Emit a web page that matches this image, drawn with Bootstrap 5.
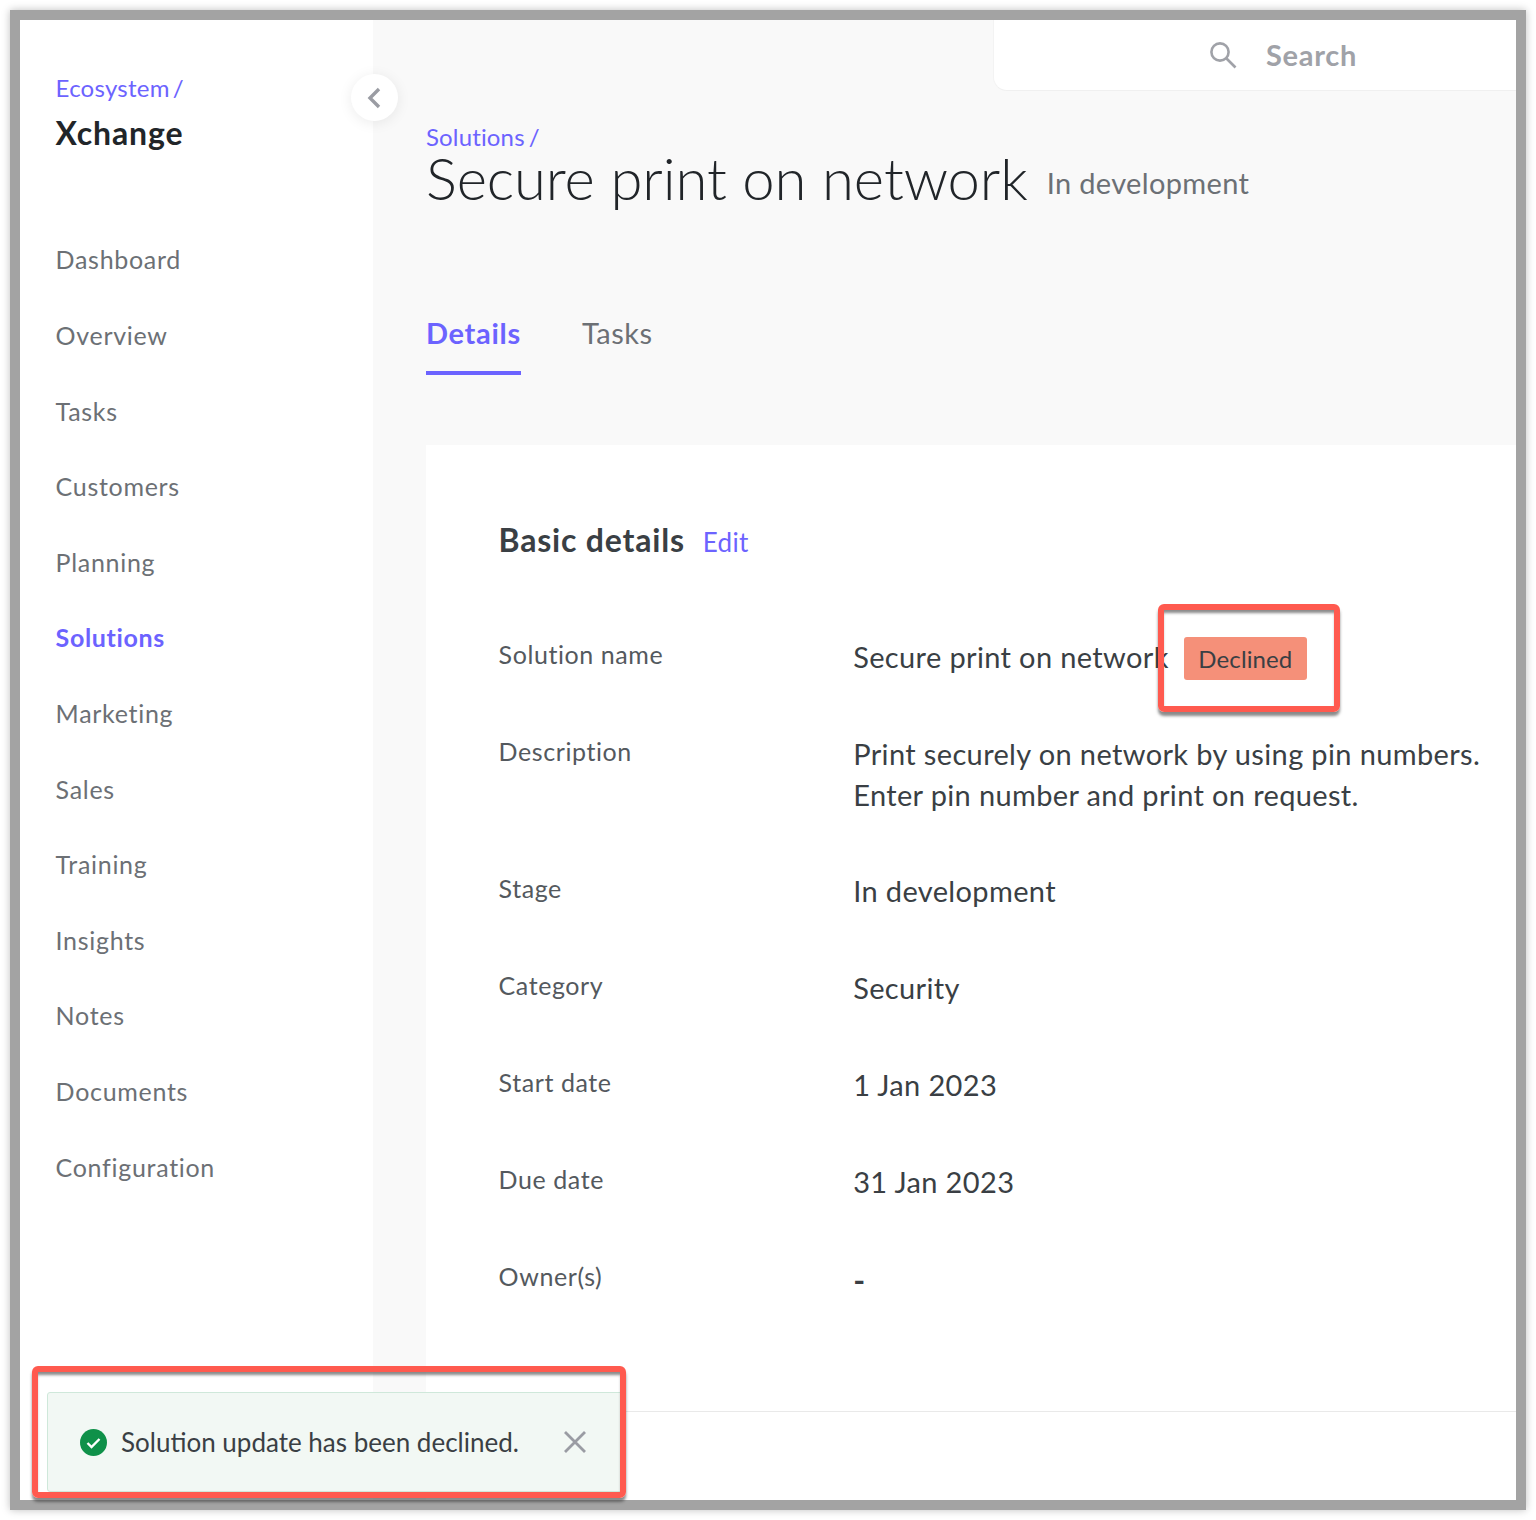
<!DOCTYPE html>
<html lang="en"><head><meta charset="utf-8"><title>Secure print on network</title>
<link href="https://cdn.jsdelivr.net/npm/bootstrap@5.3.0/dist/css/bootstrap.min.css" rel="stylesheet">
<style>
html,body{height:100%}
body{background:#fff;font-family:"Lato",sans-serif;overflow:hidden;color:#3a3f44}
.frame{position:relative;margin:10px;width:1516px;height:1500px;border:10px solid #a3a3a3;box-shadow:0 0 8px rgba(0,0,0,.25);overflow:visible}
.inner{height:100%;overflow:hidden}
.side{width:353px;flex:none;padding:53px 0 0 35.6px;background:#fff}
.crumb{font-size:24px;line-height:30px;color:#6c63ff;letter-spacing:.25px}
.crumb i{font-style:normal;margin-left:3px}
.brand{font-size:32px;line-height:42px;font-weight:700;color:#212529;margin-top:9px;letter-spacing:.9px}
.sidenav{margin-top:68.4px}
.sidenav a{display:block;height:75.6px;line-height:75.6px;font-size:25px;color:#6c7075;text-decoration:none;letter-spacing:.7px}
.sidenav a.on{color:#6c63ff;font-weight:700;letter-spacing:.65px}
.toggle{position:absolute;left:331px;top:54px;width:47px;height:47px;background:#fff;border-radius:50%;box-shadow:0 2px 14px rgba(0,0,0,.08);z-index:2}
.toggle svg{margin-left:-2px}
.mainbg{background:#f9f9f9;min-width:0}
.searchbox{width:523px;height:71px;background:#fff;border-bottom-left-radius:14px;border-bottom:1px solid #f0f0f0;border-left:1px solid #f3f3f3;padding-left:215px;gap:29px;font-size:29px;font-weight:700;color:#a0a2a8;letter-spacing:.7px}
.head{padding:31px 0 0 53px}
.crumb2{font-size:24px;line-height:30px;color:#6c63ff;letter-spacing:.15px}
.crumb2 i{font-style:normal;margin-left:4px}
.title{font-size:58px;font-weight:300;line-height:56px;color:#212529;margin:-2px 0 -1px;letter-spacing:-.1px}
.stagehint{font-size:29px;color:#6c7075;letter-spacing:.35px;margin-top:8px;margin-left:3px}
.tabbar{gap:61px;margin-top:110px}
.tabbar a{font-size:29px;line-height:36px;padding-bottom:20px;color:#6c7075;text-decoration:none;display:block;letter-spacing:.52px}
.tabbar a.on{color:#6c63ff;font-weight:700;border-bottom:4px solid #6c63ff;letter-spacing:.7px}
.panel{background:#fff;margin:70px 0 0 53px;height:1100px;position:relative;padding:71px 0 0 72.6px}
.h-sec{font-size:32px;font-weight:700;line-height:48px;color:#3a3f44;margin:0;letter-spacing:.8px}
.editlink{font-size:26px;color:#6c63ff;text-decoration:none;margin:5px 0 0 2px;letter-spacing:.3px}
.rows{margin-top:72px;row-gap:56px}
.lab{width:354.6px;flex:none;font-size:25px;line-height:35px;color:#54595e;letter-spacing:.58px;padding-top:1px}
.val{font-size:29px;color:#3a3f44;line-height:41px;letter-spacing:.36px}
.val-two{margin-bottom:-1px}
.pill{background:#f59079;color:#3a3f44;font-size:24px;line-height:43px;height:43px;padding:0 14.5px;border-radius:3px;margin:1px 0 -3px 15px;letter-spacing:.1px}
.rule{position:absolute;left:0;right:0;top:966px;border-top:1px solid #e9e9e9}
.notice{position:absolute;left:27px;top:1372px;width:576px;height:100px;background:#f2f8f4;border:1px solid #cfe8da;border-radius:3px;padding:0 36px 0 32px;z-index:3;font-size:26px;color:#3a3f44}
.notice span{margin-left:14px}
.redbox{position:absolute;border:6px solid #ff5a4f;border-radius:6px;box-shadow:inset 0 4px 3px -1px rgba(60,60,60,.6),0 4px 3px rgba(60,60,60,.6);z-index:4;pointer-events:none}
.rb1{left:1138px;top:584px;width:182px;height:108px}
.rb2{left:12px;top:1346px;width:594px;height:132px}
.dash{font-weight:700;font-size:32px;line-height:30px;position:relative;top:2px}
</style></head><body>
<div class="frame">
<div class="inner d-flex">
  <aside class="side">
    <div class="crumb">Ecosystem<i>/</i></div>
    <div class="brand">Xchange</div>
    <nav class="sidenav d-flex flex-column">
      <a href="#">Dashboard</a><a href="#">Overview</a><a href="#">Tasks</a><a href="#">Customers</a><a href="#">Planning</a><a href="#" class="on">Solutions</a><a href="#">Marketing</a><a href="#">Sales</a><a href="#">Training</a><a href="#">Insights</a><a href="#">Notes</a><a href="#">Documents</a><a href="#">Configuration</a>
    </nav>
  </aside>
  <main class="mainbg flex-grow-1">
    <div class="d-flex justify-content-end">
      <div class="searchbox d-flex align-items-center">
        <svg width="28" height="28" viewBox="0 0 28 28" fill="none" stroke="#a0a2a8" stroke-width="2.6"><circle cx="11" cy="11" r="8.6"/><path d="M17.5 17.5 26.5 26.5"/></svg>
        <span>Search</span>
      </div>
    </div>
    <div class="head">
      <div class="crumb2">Solutions<i>/</i></div>
      <div class="d-flex align-items-center gap-3">
        <h1 class="title">Secure print on network</h1><span class="stagehint">In development</span>
      </div>
      <div class="tabbar d-flex">
        <a href="#" class="on">Details</a><a href="#">Tasks</a>
      </div>
    </div>
    <section class="panel">
      <div class="d-flex align-items-center gap-3"><h2 class="h-sec">Basic details</h2><a class="editlink" href="#">Edit</a></div>
      <div class="rows d-flex flex-column">
        <div class="d-flex"><div class="lab">Solution name</div><div class="val d-flex align-items-center">Secure print on network<span class="pill">Declined</span></div></div>
        <div class="d-flex"><div class="lab">Description</div><div class="val val-two">Print securely on network by using pin numbers.<br>Enter pin number and print on request.</div></div>
        <div class="d-flex"><div class="lab">Stage</div><div class="val">In development</div></div>
        <div class="d-flex"><div class="lab">Category</div><div class="val">Security</div></div>
        <div class="d-flex"><div class="lab">Start date</div><div class="val">1 Jan 2023</div></div>
        <div class="d-flex"><div class="lab">Due date</div><div class="val">31 Jan 2023</div></div>
        <div class="d-flex"><div class="lab">Owner(s)</div><div class="val"><span class="dash">-</span></div></div>
      </div>
      <div class="rule"></div>
    </section>
  </main>
</div>
<button class="toggle btn p-0 border-0 d-flex align-items-center justify-content-center" aria-label="Collapse"><svg width="14" height="22" viewBox="0 0 14 22" fill="none" stroke="#9a9ca3" stroke-width="3.4"><path d="M12 2 3 11l9 9"/></svg></button>
<div class="notice d-flex align-items-center">
  <svg width="27" height="27" viewBox="0 0 27 27"><circle cx="13.5" cy="13.5" r="13.5" fill="#0f9149"/><path d="M7.5 14l4 4 8-8" fill="none" stroke="#fff" stroke-width="2.4"/></svg>
  <span>Solution update has been declined.</span>
  <svg class="ms-auto" width="22" height="22" viewBox="0 0 22 22" stroke="#9a9ca3" stroke-width="2.8"><path d="M1 1l20 20M21 1 1 21"/></svg>
</div>
<div class="redbox rb1"></div>
<div class="redbox rb2"></div>
</div>
</body></html>
